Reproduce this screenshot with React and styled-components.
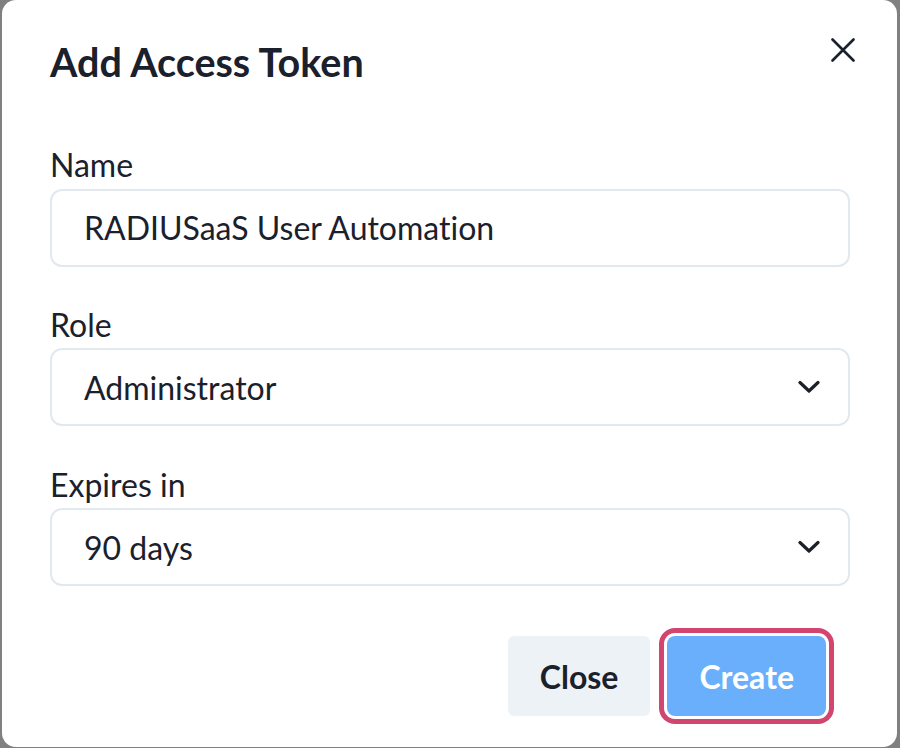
import styled, { createGlobalStyle } from "styled-components";

const GlobalStyle = createGlobalStyle`
  html, body {
    margin: 0;
    padding: 0;
    background: #808080;
  }
  body {
    font-family: Lato, "Open Sans", sans-serif;
    font-variant-ligatures: none;
    color: #1a202c;
  }
`;

const Backdrop = styled.div`
  width: 900px;
  height: 748px;
  padding: 0 3px 1px 2px;
  box-sizing: border-box;
  background: #808080;
`;

const Modal = styled.section`
  height: 747px;
  box-sizing: border-box;
  background: #ffffff;
  border-radius: 14px;
  padding: 37.5px 47px 0 48px;
  display: flex;
  flex-direction: column;
`;

const Header = styled.header`
  display: flex;
  align-items: flex-start;
  justify-content: space-between;
`;

const Title = styled.h2`
  margin: 0;
  font-size: 39.5px;
  line-height: 1.2;
  font-weight: 700;
  color: #1a202c;
`;

const CloseIcon = styled.button`
  border: none;
  background: none;
  padding: 0;
  margin: 0 -5px 0 0;
  width: 24px;
  height: 24px;
  display: flex;
  color: #1a202c;
`;

const Form = styled.div`
  display: flex;
  flex-direction: column;
  gap: 37.5px;
  margin-top: 59.3px;
`;

const Field = styled.div`
  display: flex;
  flex-direction: column;
  gap: 4px;
`;

const Label = styled.label`
  padding-top: 2px;
  font-size: 32px;
  line-height: 1.2;
  color: #1a202c;
`;

const Box = styled.div`
  height: 78px;
  box-sizing: border-box;
  border: 2px solid #e2e8f0;
  border-radius: 12px;
  padding: 0 28px 0 32px;
  display: flex;
  align-items: center;
  justify-content: space-between;
  font-size: 32px;
  color: #1a202c;
`;

const Footer = styled.footer`
  display: flex;
  justify-content: flex-end;
  gap: 17px;
  margin-top: 50px;
  padding-right: 24px;
`;

const Button = styled.button`
  height: 80px;
  border: none;
  font-family: Lato, sans-serif;
  font-size: 32px;
  font-weight: 700;
  padding: 0 32px;
  background: ${(p) => (p.$primary ? "#69affc" : "#edf2f7")};
  color: ${(p) => (p.$primary ? "#ffffff" : "#1a202c")};
  box-shadow: ${(p) =>
    p.$focused ? "0 0 0 3px #ffffff, 0 0 0 8px #d1456f" : "none"};
  border-radius: ${(p) => (p.$focused ? "8px" : "6px")};
`;

const Chevron = () => (
  <svg width="22" height="14" viewBox="0 0 22 14" fill="none">
    <path
      d="M2 2.5 L11 11 L20 2.5"
      stroke="#1a202c"
      strokeWidth="3.2"
      strokeLinecap="round"
      strokeLinejoin="round"
    />
  </svg>
);

const App = () => (
  <>
    <GlobalStyle />
    <Backdrop>
      <Modal>
        <Header>
          <Title>Add Access Token</Title>
          <CloseIcon aria-label="Close">
            <svg width="24" height="24" viewBox="0 0 24 24" fill="none">
              <path
                d="M1.5 1.5 L22.5 22.5 M22.5 1.5 L1.5 22.5"
                stroke="#1a202c"
                strokeWidth="2.6"
                strokeLinecap="round"
              />
            </svg>
          </CloseIcon>
        </Header>
        <Form>
          <Field>
            <Label>Name</Label>
            <Box>RADIUSaaS User Automation</Box>
          </Field>
          <Field>
            <Label>Role</Label>
            <Box>
              Administrator
              <Chevron />
            </Box>
          </Field>
          <Field>
            <Label>Expires in</Label>
            <Box>
              90 days
              <Chevron />
            </Box>
          </Field>
        </Form>
        <Footer>
          <Button>Close</Button>
          <Button $primary $focused>
            Create
          </Button>
        </Footer>
      </Modal>
    </Backdrop>
  </>
);

export default App;
